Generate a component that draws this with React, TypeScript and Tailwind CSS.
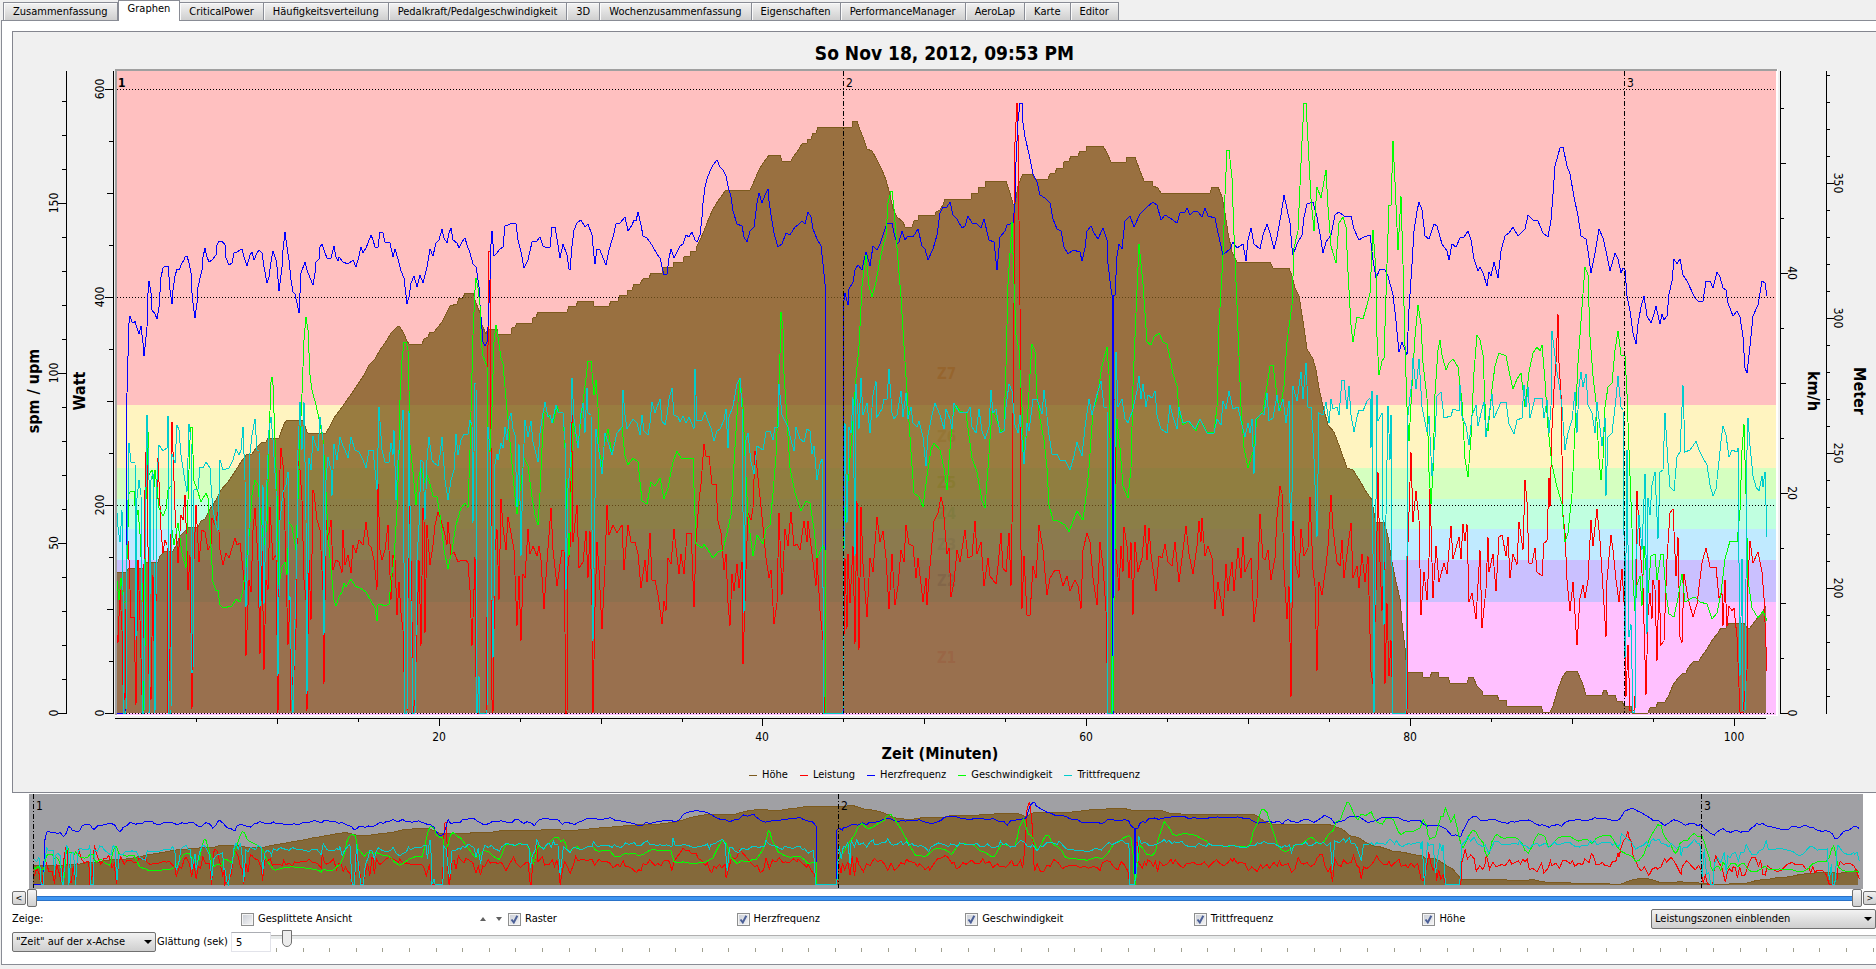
import { useState } from "react";

const TABS = [
    "Zusammenfassung",
    "Graphen",
    "CriticalPower",
    "Häufigkeitsverteilung",
    "Pedalkraft/Pedalgeschwindigkeit",
    "3D",
    "Wochenzusammenfassung",
    "Eigenschaften",
    "PerformanceManager",
    "AeroLap",
    "Karte",
    "Editor",
];

const SERIES = ["Raster", "Herzfrequenz", "Geschwindigkeit", "Trittfrequenz", "Höhe"];

const LEGEND = [
    { name: "Höhe", color: "bg-[#7c5a1e]" },
    { name: "Leistung", color: "bg-[#ff0000]" },
    { name: "Herzfrequenz", color: "bg-[#0000ff]" },
    { name: "Geschwindigkeit", color: "bg-[#00ff00]" },
    { name: "Trittfrequenz", color: "bg-[#00cdcd]" },
];

const ZONES = [
    { name: "Z7", top: 71, bottom: 405, fill: "#ffc0c0", text: "#f08c70", y: 379 },
    { name: "Z6", top: 405, bottom: 468, fill: "#fff4c0", text: "#ecdc90", y: 442 },
    { name: "Z5", top: 468, bottom: 499, fill: "#d5ffc0", text: "#b8f080", y: 488 },
    { name: "Z4", top: 499, bottom: 529, fill: "#c0ffe0", text: "#90f0c0", y: 519 },
    { name: "Z3", top: 529, bottom: 560, fill: "#c0eaff", text: "#a0d0f0", y: 550 },
    { name: "Z2", top: 560, bottom: 602, fill: "#cac0ff", text: "#9a90e8", y: 586 },
    { name: "Z1", top: 602, bottom: 715, fill: "#ffc0ff", text: "#ff90d8", y: 663 },
];

const HEART =
    "117,713 126,713 127,393 128,357 129,323 130,316 132,322 134,323 135,321 137,328 139,334 141,326 143,343 144,356 145,347 147,327 148,293 149,281 151,293 152,310 155,314 157,319 159,307 161,277 163,268 165,266 168,266 169,277 170,290 172,304 173,290 175,276 177,269 179,270 182,263 184,260 185,257 187,256 189,263 191,273 192,293 193,303 195,318 197,303 198,287 202,270 203,257 205,248 207,257 209,262 212,260 216,255 217,245 219,241 222,241 225,245 226,258 229,265 232,263 234,253 237,252 242,249 244,257 247,266 250,255 252,252 254,260 257,253 259,250 262,253 264,267 267,283 269,277 271,262 273,251 276,260 277,267 279,291 282,267 283,250 285,232 287,247 289,260 291,280 293,292 295,294 297,303 299,313 300,293 301,273 305,262 307,270 310,278 313,285 315,273 316,262 319,259 320,247 322,244 325,253 327,258 331,258 334,246 336,257 338,261 339,257 343,262 348,264 353,260 356,267 358,260 361,247 363,253 366,248 368,243 371,235 373,240 375,247 378,247 380,232 383,233 385,242 390,243 393,257 395,249 398,259 401,271 404,278 407,304 409,297 411,283 414,276 417,287 420,275 423,283 427,267 430,249 433,256 436,243 439,240 442,229 444,238 447,243 449,233 451,228 453,240 457,243 459,248 462,242 465,238 467,245 470,253 473,264 476,267 477,273 479,287 480,305 482,329 483,342 485,346 487,342 488,327 490,280 491,244 492,231 494,256 497,253 500,249 503,247 505,226 508,225 512,223 516,224 518,240 521,252 524,268 528,260 532,242 537,241 540,237 543,246 547,248 550,247 552,227 555,227 557,239 560,258 563,244 567,255 569,269 570,270 572,246 574,230 577,223 581,220 585,227 588,224 592,235 594,256 595,264 597,249 600,250 603,258 606,265 609,250 613,237 616,224 620,223 625,217 628,231 632,225 634,220 636,221 638,212 641,225 643,236 647,238 650,242 653,247 657,254 660,258 663,271 664,275 667,274 669,258 671,249 674,258 677,252 680,246 683,244 686,235 689,237 692,232 695,240 697,242 700,235 702,217 703,203 705,187 707,179 710,171 713,165 717,160 720,167 723,170 726,176 728,186 731,197 733,211 737,224 742,226 744,237 747,242 750,231 754,227 757,203 759,193 762,203 765,195 768,189 769,201 771,215 774,233 778,247 782,244 786,233 790,235 795,227 798,225 802,221 805,224 808,212 811,217 813,229 817,239 821,246 823,264 825,284 825,713 843,713 843,308 845,293 848,305 849,289 853,282 855,270 858,265 862,270 864,260 866,252 869,262 870,266 873,246 877,250 880,244 883,235 887,223 892,223 894,233 897,244 899,242 902,231 905,240 908,236 913,237 918,229 922,246 925,249 928,260 933,249 937,235 940,213 943,207 947,207 950,202 953,215 957,219 962,228 965,226 968,216 972,223 977,224 981,228 984,219 989,240 994,242 997,270 1000,237 1005,231 1007,225 1013,223 1015,203 1016,162 1018,121 1020,103 1022,103 1023,123 1025,137 1029,154 1033,174 1037,182 1040,195 1045,198 1050,203 1053,219 1057,229 1061,231 1064,247 1068,254 1073,250 1080,252 1082,261 1085,248 1087,231 1091,226 1094,233 1098,239 1103,228 1107,240 1108,264 1111,289 1112,295 1112,713 1113,713 1113,295 1115,295 1117,256 1119,244 1122,249 1125,221 1130,216 1134,227 1140,214 1147,207 1153,202 1157,205 1161,220 1165,215 1170,218 1177,223 1180,213 1185,212 1187,208 1190,215 1194,211 1198,212 1202,217 1205,208 1208,216 1215,218 1218,233 1221,246 1223,255 1230,249 1233,242 1237,248 1243,244 1246,261 1248,240 1251,228 1254,244 1260,249 1263,235 1267,224 1270,233 1274,249 1277,237 1281,215 1284,195 1287,209 1290,223 1292,248 1293,255 1297,244 1302,235 1304,217 1307,204 1313,202 1317,217 1321,240 1323,253 1326,242 1331,235 1335,215 1339,212 1344,216 1351,216 1354,229 1359,240 1364,237 1370,235 1373,260 1376,278 1380,269 1385,270 1388,276 1393,295 1396,321 1399,352 1402,342 1407,355 1409,309 1412,264 1414,231 1417,211 1419,202 1422,210 1425,236 1429,239 1434,224 1437,226 1442,244 1447,251 1449,260 1452,244 1456,247 1460,238 1464,237 1468,231 1471,240 1474,259 1478,271 1480,267 1483,273 1487,286 1489,272 1491,276 1494,262 1498,278 1501,251 1505,236 1509,233 1513,227 1518,236 1525,229 1528,215 1533,220 1538,221 1543,233 1548,237 1551,220 1553,194 1555,166 1560,148 1563,147 1567,166 1570,174 1574,197 1578,216 1581,236 1586,239 1588,251 1591,273 1595,253 1599,229 1603,238 1606,251 1610,271 1615,253 1618,259 1621,273 1623,268 1625,270 1627,296 1630,311 1633,333 1636,344 1638,324 1641,307 1644,296 1647,316 1651,323 1654,314 1656,306 1660,324 1662,314 1664,320 1667,316 1669,294 1672,281 1674,259 1677,264 1680,259 1683,275 1687,281 1695,298 1699,302 1703,301 1706,281 1710,281 1713,288 1717,272 1720,277 1723,288 1726,290 1728,303 1733,316 1737,311 1740,317 1743,337 1745,368 1747,373 1750,346 1753,316 1758,305 1762,281 1765,283 1767,296";

const ALTITUDE =
    "117,572 126,572 129,568 144,568 145,562 158,562 160,556 165,551 173,551 176,546 180,536 186,530 188,527 198,527 201,521 205,519 210,509 216,500 221,490 228,482 234,473 241,462 246,455 252,454 256,448 261,443 266,442 268,438 279,438 284,424 287,420 303,420 307,432 308,433 326,433 330,426 334,418 340,410 347,400 352,393 358,384 364,375 369,365 375,359 380,350 387,340 391,333 396,328 398,326 400,327 404,334 407,341 409,344 422,344 424,339 428,337 430,332 434,332 438,327 442,322 446,314 450,306 457,304 459,298 463,298 465,293 473,293 476,303 480,313 482,325 486,334 488,329 497,329 498,334 511,334 512,328 515,327 517,323 532,323 533,318 536,317 538,312 567,312 569,306 576,306 578,301 593,301 594,306 609,306 611,301 618,301 620,295 627,295 628,290 632,290 634,284 640,284 643,279 649,278 651,273 662,273 663,267 673,267 674,262 683,262 684,257 690,256 691,251 696,251 697,246 700,240 704,231 709,218 713,209 718,201 723,194 726,190 750,190 753,184 758,172 763,163 767,158 769,155 780,155 782,161 791,161 793,157 797,152 802,144 807,143 808,139 811,139 813,133 816,133 818,127 852,127 853,121 857,121 860,130 863,137 867,149 872,151 877,160 882,170 886,180 890,195 893,209 897,217 903,222 905,227 912,227 914,221 918,220 919,215 935,215 936,212 940,210 943,205 945,199 971,199 972,193 978,193 979,187 985,187 986,181 1006,181 1010,193 1013,204 1015,204 1018,186 1021,178 1023,174 1032,174 1035,179 1048,179 1050,174 1055,173 1057,168 1063,168 1064,162 1069,161 1071,156 1078,156 1080,151 1086,151 1087,146 1103,146 1107,153 1111,162 1126,162 1127,157 1135,157 1140,171 1144,181 1152,181 1153,186 1158,188 1161,193 1210,193 1212,187 1218,187 1222,197 1225,213 1228,233 1232,252 1237,262 1270,262 1273,268 1289,268 1292,276 1295,288 1299,296 1303,321 1307,349 1313,359 1316,370 1319,388 1323,406 1328,425 1334,432 1340,448 1347,468 1353,470 1360,481 1365,490 1372,500 1374,513 1376,522 1384,522 1388,537 1392,562 1396,582 1400,599 1402,623 1405,648 1407,672 1422,672 1423,677 1430,677 1432,672 1438,672 1439,677 1448,677 1450,683 1467,683 1469,677 1473,677 1477,686 1482,691 1483,695 1497,695 1499,700 1506,700 1507,706 1541,706 1543,712 1550,712 1553,706 1558,689 1563,676 1567,671 1577,671 1582,682 1586,695 1602,695 1604,690 1606,690 1608,695 1615,695 1617,701 1622,701 1624,706 1631,706 1632,713 1648,713 1650,708 1656,707 1658,702 1665,702 1669,695 1673,685 1678,678 1682,674 1686,673 1688,668 1693,662 1699,661 1702,656 1707,649 1713,639 1718,633 1721,628 1726,628 1729,623 1744,623 1747,628 1750,628 1753,624 1758,617 1762,613 1765,608 1766,606";

const SPEED =
    "117,581 119,600 121,578 124,603 126,601 127,560 129,494 130,492 134,491 136,520 138,510 140,534 142,580 143,713 145,650 146,500 148,431 149,475 152,470 154,487 155,470 157,487 159,508 163,516 166,509 168,490 171,486 172,530 174,545 178,523 182,553 186,568 188,500 190,440 191,427 192,427 194,481 197,489 201,502 206,493 208,498 210,530 213,582 216,591 218,590 220,605 223,608 232,606 236,599 240,602 243,590 245,575 248,550 252,495 255,480 258,485 261,520 264,545 267,525 269,440 271,382 272,377 273,385 275,440 277,495 279,585 282,567 285,562 287,575 289,522 292,527 296,550 298,500 300,440 302,394 304,340 306,317 308,330 310,375 312,390 316,405 320,423 323,440 325,470 328,535 331,570 334,600 336,606 339,597 342,592 344,583 346,587 351,579 355,586 360,588 366,592 371,601 375,608 377,621 378,605 380,604 385,606 389,604 391,580 394,560 397,510 399,455 400,400 402,360 404,342 406,342 408,350 409,390 410,445 413,472 416,505 418,480 421,468 424,483 427,475 430,484 433,496 437,497 440,515 444,550 448,569 452,550 456,525 461,508 465,503 468,508 470,450 473,335 475,290 476,278 478,288 480,305 481,340 483,356 487,366 488,427 490,452 492,407 494,342 496,325 498,337 501,358 503,364 506,399 509,431 512,464 515,497 517,514 521,484 524,458 528,466 532,497 535,515 538,525 540,493 542,448 544,411 548,415 553,423 557,406 559,412 563,413 565,448 567,509 569,556 570,533 572,452 573,423 576,437 578,448 581,419 585,386 588,361 591,361 594,395 596,380 598,407 599,448 602,468 604,446 608,429 612,454 617,433 622,427 625,456 628,465 633,458 638,462 642,501 647,504 651,482 655,486 660,478 664,499 668,488 671,472 673,462 677,451 681,458 687,459 693,458 694,488 696,544 702,548 704,544 708,550 713,558 718,552 723,550 727,533 731,515 733,480 737,415 740,378 743,407 745,456 748,517 753,556 757,535 763,544 766,529 770,525 773,493 776,456 778,407 780,354 781,312 783,329 784,374 787,419 790,468 795,493 801,511 806,501 810,503 814,529 817,558 823,545 825,550 825,713 843,713 844,537 847,493 852,435 856,378 859,346 862,286 866,255 869,286 872,297 876,282 880,260 883,246 886,235 888,203 891,191 892,191 894,209 897,248 901,297 904,346 908,407 911,452 914,493 919,497 923,507 927,476 931,450 934,443 940,450 944,468 947,490 949,460 953,415 956,405 960,411 966,413 972,458 977,472 982,501 985,508 988,468 992,411 995,415 1001,432 1004,429 1006,366 1008,284 1012,222 1014,284 1016,335 1019,350 1022,407 1024,462 1027,427 1030,374 1032,344 1035,352 1037,395 1040,419 1044,440 1047,468 1049,505 1053,520 1058,521 1065,525 1069,532 1073,521 1077,511 1083,520 1087,488 1089,468 1093,411 1097,399 1102,366 1107,347 1109,374 1111,500 1112,713 1113,713 1114,600 1115,550 1117,419 1120,448 1123,486 1128,498 1131,468 1133,386 1136,313 1139,244 1143,284 1147,342 1151,345 1154,337 1159,333 1163,342 1167,344 1170,358 1173,374 1177,386 1179,411 1183,425 1188,421 1196,431 1200,419 1207,432 1214,433 1217,407 1219,325 1223,256 1225,195 1227,150 1229,150 1232,178 1234,235 1237,305 1241,407 1244,448 1248,468 1253,452 1257,419 1263,411 1267,386 1270,366 1273,365 1277,395 1280,411 1284,386 1287,342 1292,305 1294,248 1298,231 1302,141 1304,103 1306,103 1308,141 1311,199 1314,231 1317,187 1321,198 1326,170 1328,207 1331,246 1336,263 1339,223 1343,217 1346,227 1348,272 1351,325 1353,342 1357,317 1363,319 1367,305 1370,293 1373,230 1376,272 1377,337 1379,375 1382,361 1384,358 1387,264 1389,205 1391,205 1393,141 1395,182 1398,250 1401,196 1403,264 1405,346 1407,407 1409,441 1412,386 1415,337 1418,305 1421,324 1423,363 1427,398 1429,472 1431,504 1433,472 1435,394 1438,350 1440,340 1442,355 1446,370 1449,363 1453,359 1458,367 1462,402 1465,459 1468,477 1471,437 1474,372 1477,335 1480,340 1483,355 1486,428 1488,431 1492,389 1495,366 1499,353 1506,356 1510,376 1513,389 1517,379 1521,373 1525,407 1529,372 1533,353 1537,347 1540,351 1542,345 1545,381 1548,428 1552,465 1557,487 1562,504 1565,542 1568,533 1572,494 1575,428 1578,363 1582,307 1585,267 1588,275 1590,337 1593,376 1596,402 1599,459 1601,480 1603,459 1605,407 1608,387 1612,383 1615,350 1618,331 1621,355 1625,356 1627,394 1629,450 1632,528 1633,580 1635,611 1637,585 1640,576 1642,606 1644,546 1648,593 1651,556 1655,554 1657,580 1661,554 1663,554 1666,593 1669,614 1674,617 1678,598 1682,574 1685,602 1692,598 1695,597 1700,602 1707,604 1712,619 1717,613 1721,593 1725,559 1730,541 1737,542 1740,511 1742,450 1744,424 1746,494 1748,580 1752,608 1758,618 1763,611 1767,621";

const CADENCE =
    "117,513 118,527 120,542 122,510 123,590 124,713 126,713 127,545 128,500 129,443 131,462 135,462 136,640 137,498 139,480 141,495 142,600 143,713 144,713 145,560 147,415 149,480 149,713 151,480 153,472 154,560 155,713 157,480 159,445 163,451 167,448 168,416 169,713 171,713 172,454 175,463 177,425 179,430 181,455 184,475 187,492 189,424 191,440 192,672 193,672 194,490 198,489 200,467 203,468 206,462 210,468 211,485 213,510 216,525 218,531 220,460 223,470 229,468 233,460 236,449 239,455 241,450 243,427 245,480 246,607 249,530 250,453 252,435 255,419 257,450 259,450 260,607 263,485 264,604 267,480 269,430 271,417 273,440 276,489 277,560 278,676 280,520 283,492 286,485 288,472 289,600 290,596 292,700 293,713 295,620 297,540 298,450 300,402 302,450 304,402 306,520 307,694 309,458 311,470 313,436 315,443 318,451 320,417 323,440 324,635 326,480 328,457 331,470 332,496 334,444 337,460 340,437 343,446 345,450 348,458 351,437 355,450 359,452 363,460 366,468 369,450 373,450 375,470 377,490 379,407 382,450 385,462 389,462 391,443 393,455 394,430 396,500 398,460 401,430 403,410 405,713 407,713 408,560 409,411 411,600 413,713 415,713 417,560 419,525 421,460 423,462 425,520 427,460 429,437 432,460 434,463 438,466 440,455 442,437 445,480 448,500 451,480 454,470 456,434 458,455 461,440 464,434 468,434 470,420 472,425 473,523 475,383 476,384 477,713 479,676 480,713 487,713 488,427 490,450 492,600 493,658 494,600 495,464 497,454 498,460 501,443 503,448 505,427 507,440 509,419 511,413 513,429 515,435 517,507 519,444 521,556 523,468 525,420 528,437 531,421 533,442 538,462 540,433 542,419 545,402 548,417 550,415 552,423 556,405 558,412 563,413 565,440 566,590 568,488 570,468 572,378 574,419 578,448 581,413 583,403 585,433 587,388 588,413 591,415 593,641 594,570 596,429 598,444 602,474 605,433 608,442 612,455 617,433 622,427 623,390 625,415 627,429 633,419 637,423 640,435 642,415 644,431 648,435 650,423 652,402 655,413 660,399 662,421 665,425 667,415 669,399 672,388 674,415 678,417 680,422 683,416 686,423 689,417 694,429 695,369 697,421 702,420 705,412 708,421 711,428 714,441 717,431 720,429 724,420 726,409 728,448 729,417 733,406 737,384 740,378 742,407 744,613 746,440 748,433 751,462 754,474 757,446 763,450 766,432 770,431 773,440 775,427 778,427 779,384 782,415 785,421 788,427 791,440 794,451 796,427 800,439 804,442 807,429 810,431 812,454 814,446 817,480 820,464 822,459 824,713 843,713 844,550 845,423 847,523 849,427 851,433 853,397 855,556 856,384 859,429 861,378 863,415 867,403 870,433 873,395 876,381 877,417 882,409 884,399 887,399 889,369 892,413 894,419 897,415 901,391 903,417 906,393 908,419 911,407 913,423 917,427 919,421 923,437 926,466 928,435 932,415 935,403 940,415 944,429 946,409 950,419 952,429 954,403 959,412 967,413 970,407 972,427 976,433 979,409 982,431 985,439 989,427 991,390 993,413 996,409 1000,433 1004,431 1006,407 1009,384 1012,391 1015,425 1018,433 1020,415 1024,464 1027,423 1029,431 1033,399 1037,399 1042,414 1044,390 1046,407 1049,435 1052,454 1057,454 1060,460 1065,460 1070,470 1074,456 1077,442 1082,456 1085,427 1089,399 1092,415 1096,398 1101,381 1104,407 1107,407 1108,713 1112,713 1114,600 1115,448 1116,352 1118,407 1122,399 1125,419 1128,423 1133,409 1137,391 1139,376 1141,399 1143,384 1146,407 1148,395 1152,398 1155,391 1157,415 1161,429 1167,433 1170,405 1173,417 1177,429 1179,407 1183,423 1189,421 1195,429 1200,419 1207,433 1214,433 1217,419 1221,425 1223,401 1226,409 1229,391 1233,409 1238,407 1241,421 1245,437 1248,423 1250,433 1252,419 1254,474 1256,419 1262,413 1264,415 1267,393 1269,421 1273,418 1277,395 1279,411 1283,399 1286,423 1289,401 1291,603 1293,386 1297,401 1301,372 1303,399 1306,363 1308,407 1311,407 1313,433 1317,537 1319,413 1323,415 1326,402 1329,423 1331,399 1333,409 1337,407 1339,415 1342,380 1344,380 1347,409 1349,386 1351,415 1354,432 1357,417 1359,410 1363,411 1367,401 1370,398 1371,448 1372,391 1374,713 1377,395 1378,421 1382,413 1384,625 1388,406 1390,460 1391,415 1393,713 1406,713 1407,558 1408,415 1412,380 1413,358 1416,389 1419,359 1422,407 1427,432 1429,416 1432,476 1435,437 1437,396 1441,392 1444,418 1451,416 1453,409 1459,411 1460,385 1462,416 1466,426 1469,445 1472,416 1476,405 1478,426 1482,409 1484,402 1486,437 1489,416 1492,394 1494,418 1498,409 1501,402 1506,402 1509,424 1514,434 1517,420 1522,418 1524,385 1526,407 1528,387 1530,418 1535,398 1542,398 1544,418 1547,400 1549,433 1551,407 1552,331 1554,348 1557,372 1560,390 1562,407 1565,450 1568,433 1572,420 1575,392 1577,433 1579,387 1581,372 1583,387 1586,374 1588,405 1592,413 1595,433 1597,402 1600,428 1602,446 1605,418 1606,496 1608,437 1612,433 1614,416 1616,398 1618,376 1621,407 1623,410 1625,658 1627,450 1629,637 1631,624 1633,712 1635,712 1636,559 1639,515 1642,550 1645,474 1647,634 1648,498 1650,515 1652,485 1655,472 1658,539 1660,472 1663,470 1665,413 1668,463 1670,487 1674,491 1677,457 1680,452 1683,385 1685,452 1690,450 1693,446 1696,441 1699,450 1703,458 1707,465 1710,485 1713,496 1716,489 1719,461 1721,441 1723,426 1726,435 1729,457 1732,450 1737,452 1738,448 1740,676 1742,559 1743,710 1745,712 1747,450 1748,418 1750,446 1753,476 1756,487 1759,491 1762,476 1763,487 1765,472 1767,537";

const POWER =
    "117,635 118,643 120,590 122,630 123,685 125,700 127,520 129,560 131,618 134,617 136,705 138,560 140,620 142,695 143,640 145,490 147,415 149,674 151,700 153,575 155,705 157,500 158,458 161,530 163,553 165,540 167,545 168,713 170,650 172,422 175,510 178,563 181,515 183,520 185,495 187,550 188,590 190,555 192,709 194,560 196,505 199,562 202,530 205,532 208,550 211,545 212,518 215,525 218,512 220,550 223,565 226,553 229,558 232,548 235,538 237,545 240,543 243,570 245,590 246,656 249,580 251,592 253,530 255,508 258,560 260,654 262,550 264,670 266,580 268,590 270,507 273,560 276,555 278,713 280,470 281,448 283,465 285,530 288,645 290,600 290,711 292,685 294,670 296,630 298,461 300,470 302,500 304,580 306,600 307,711 309,560 311,620 313,490 314,493 317,520 320,530 323,590 324,684 326,520 328,540 331,520 333,570 336,560 339,562 342,573 343,530 345,565 348,555 351,573 353,545 356,553 359,540 363,545 366,522 369,545 371,547 374,560 377,590 378,483 380,550 382,560 385,550 388,525 391,600 393,555 395,560 397,615 399,582 401,613 403,630 405,713 407,713 409,487 411,560 412,620 413,713 415,700 417,625 419,560 421,646 423,508 424,520 425,633 427,525 430,565 433,545 435,525 438,512 441,520 445,535 447,545 448,522 451,555 454,552 458,562 462,560 466,560 468,563 470,590 472,646 474,590 475,557 476,677 478,713 486,713 487,620 488,346 489,251 490,251 491,448 492,700 493,713 495,550 497,529 499,600 501,499 503,527 506,550 508,517 511,533 514,550 517,626 519,576 521,641 523,574 525,578 528,529 530,554 533,546 537,556 539,546 541,560 544,609 547,562 551,508 553,550 557,586 562,550 564,550 566,713 567,713 568,566 570,548 572,415 573,542 577,505 579,568 583,562 586,531 588,578 590,531 592,605 593,713 595,607 597,542 599,570 602,629 605,566 607,505 609,535 613,525 617,533 622,525 624,570 628,525 631,542 635,542 638,554 641,588 645,560 647,582 650,533 652,580 655,580 658,595 662,624 664,601 666,611 668,558 671,564 674,529 676,548 679,574 681,554 684,574 687,533 691,533 692,554 694,607 696,542 699,501 701,484 704,444 706,456 709,456 712,484 716,484 718,521 721,533 724,570 726,554 728,603 730,626 732,574 734,591 737,564 739,588 742,562 743,664 746,570 748,513 751,520 753,508 755,451 757,468 760,497 763,527 766,558 769,578 771,570 774,624 777,603 779,513 782,595 785,529 788,546 791,512 794,546 797,544 800,550 804,521 807,542 808,521 812,554 816,586 817,556 820,611 823,640 824,697 825,713 843,713 845,558 847,629 848,554 850,603 853,546 855,644 857,501 859,650 861,507 863,564 867,617 870,558 873,572 877,517 880,542 883,531 886,558 889,609 892,554 895,605 898,586 901,550 904,562 906,525 909,544 913,546 916,578 918,558 923,602 926,578 927,605 930,566 934,521 938,513 941,497 943,505 947,554 949,548 951,597 954,582 957,550 960,562 965,530 968,558 972,556 975,521 977,554 981,542 984,586 988,558 990,576 996,584 998,566 1001,533 1003,568 1006,572 1009,533 1011,586 1012,525 1014,305 1015,142 1017,103 1018,133 1020,305 1021,550 1022,609 1024,556 1027,615 1030,615 1033,566 1036,578 1039,525 1043,550 1047,595 1050,578 1055,570 1059,570 1063,586 1067,576 1070,591 1075,580 1078,586 1081,609 1083,550 1087,533 1090,542 1093,578 1097,605 1100,542 1103,566 1106,611 1108,713 1112,713 1113,399 1115,399 1116,550 1119,591 1121,546 1123,572 1124,527 1127,546 1129,578 1131,542 1133,615 1135,542 1138,572 1142,558 1145,525 1147,560 1149,528 1151,554 1156,591 1159,556 1162,558 1165,544 1168,562 1172,566 1175,542 1179,582 1183,550 1186,526 1189,554 1193,574 1197,546 1199,521 1201,542 1202,518 1205,556 1208,546 1212,558 1215,609 1218,582 1223,616 1226,564 1228,591 1232,562 1234,591 1238,548 1241,578 1243,537 1245,572 1248,564 1251,558 1254,622 1257,599 1260,514 1263,558 1265,560 1268,550 1271,580 1275,558 1277,517 1280,486 1282,493 1284,570 1287,619 1289,586 1291,697 1293,521 1296,566 1299,578 1301,529 1304,556 1308,548 1310,497 1313,570 1315,586 1317,671 1319,582 1322,595 1326,566 1328,546 1331,495 1333,529 1337,562 1340,566 1342,540 1344,578 1347,554 1351,523 1353,578 1357,566 1359,588 1362,554 1365,582 1368,556 1371,672 1373,684 1376,591 1378,472 1380,562 1382,611 1384,562 1385,684 1387,603 1389,676 1391,640 1393,713 1407,713 1408,543 1411,452 1413,522 1416,491 1419,520 1421,615 1424,572 1427,600 1429,559 1430,489 1433,598 1436,546 1439,582 1444,563 1447,574 1451,526 1453,559 1459,537 1461,559 1463,524 1465,541 1467,524 1469,602 1472,593 1476,619 1480,550 1482,628 1486,589 1488,537 1489,572 1493,554 1496,591 1499,537 1502,535 1506,556 1508,537 1510,578 1513,554 1517,565 1519,522 1523,550 1525,480 1527,502 1529,563 1532,563 1535,548 1537,572 1542,576 1544,543 1547,541 1549,478 1550,507 1552,428 1554,389 1556,363 1558,314 1559,363 1561,394 1563,515 1565,533 1567,580 1570,611 1573,582 1577,645 1580,598 1583,585 1585,598 1588,580 1591,520 1593,546 1597,509 1600,541 1603,589 1606,637 1607,580 1611,535 1613,550 1616,580 1619,602 1622,569 1624,602 1626,697 1628,645 1630,710 1634,710 1635,697 1637,491 1640,546 1643,587 1646,695 1648,615 1650,593 1652,619 1653,580 1655,589 1657,661 1659,580 1661,645 1664,641 1667,559 1670,513 1673,509 1676,576 1678,537 1680,637 1682,643 1684,574 1688,598 1693,617 1697,604 1702,563 1706,548 1710,567 1716,567 1719,598 1722,593 1723,626 1725,580 1727,626 1729,606 1732,611 1734,608 1737,637 1740,712 1743,712 1747,671 1748,580 1750,541 1753,563 1758,552 1762,572 1764,598 1767,671";

const LAPS = [
    { label: "2", x: 843 },
    { label: "3", x: 1624 },
];

const steps = (from: number, count: number, size: number) =>
    Array.from({ length: count }, (_, i) => ({ i, pos: Math.round(from + i * size) }));

const Curves = () => (
    <g fill="none" strokeWidth="1" shapeRendering="crispEdges">
        <polygon points={`117,713 ${ALTITUDE} 1766,713`} fill="#7c5a1c" fillOpacity="0.78" />
        <polyline points={ALTITUDE} stroke="#7c5a1e" vectorEffect="non-scaling-stroke" />
        <polyline points={POWER} stroke="#ff0000" vectorEffect="non-scaling-stroke" />
        <polyline points={HEART} stroke="#0000ff" vectorEffect="non-scaling-stroke" />
        <polyline points={SPEED} stroke="#00ff00" vectorEffect="non-scaling-stroke" />
        <polyline points={CADENCE} stroke="#00cdcd" vectorEffect="non-scaling-stroke" />
    </g>
);

type AxisProps = {
    x: number;
    side: 1 | -1;
    ticks: { pos: number; size: number; label?: string }[];
    labelX: number;
    title: string;
    titleX: number;
};

const VerticalAxis = ({ x, side, ticks, labelX, title, titleX }: AxisProps) => {
    const angle = side * 90;
    return (
        <g>
            <g stroke="#000" shapeRendering="crispEdges">
                <line x1={x} y1="71" x2={x} y2="714" />
                {ticks.map((t) => (
                    <line key={t.pos} x1={x} y1={t.pos} x2={x + side * t.size} y2={t.pos} />
                ))}
            </g>
            {ticks.filter((t) => t.label).map((t) => (
                <text key={t.pos} transform={`translate(${labelX} ${t.pos}) rotate(${angle})`} textAnchor="middle" className="text-[12px]">
                    {t.label}
                </text>
            ))}
            <text transform={`translate(${titleX} 391) rotate(${angle})`} textAnchor="middle" className="text-[16px] font-bold">
                {title}
            </text>
        </g>
    );
};

const RideChart = () => {
    const bpm = steps(713, 19, -34).map(({ i, pos }) => ({
        pos,
        size: i % 5 === 0 ? 8 : 4,
        label: i % 5 === 0 ? String(i * 10) : undefined,
    }));
    const watts = steps(713, 13, -52).map(({ i, pos }) => ({
        pos,
        size: i % 4 === 0 ? 8 : i % 2 === 0 ? 6 : 4,
        label: i % 4 === 0 ? String(i * 50) : undefined,
    }));
    const kmh = steps(713, 12, -55).map(({ i, pos }) => ({
        pos,
        size: i % 4 === 0 ? 8 : i % 2 === 0 ? 6 : 4,
        label: i % 4 === 0 ? String(i * 5) : undefined,
    }));
    const meters = steps(696, 24, -27).map(({ i, pos }) => ({
        pos,
        size: i % 5 === 4 ? 8 : 4,
        label: i % 5 === 4 ? String(160 + i * 10) : undefined,
    }));
    const minutes = steps(196, 20, 81).map(({ i, pos }) => ({
        pos: pos - Math.round(i / 14),
        size: i % 4 === 3 ? 8 : i % 2 === 1 ? 6 : 4,
        label: i % 4 === 3 ? String((i + 1) * 5) : undefined,
    }));

    return (
        <svg viewBox="13 69 1863 695" className="block w-full" role="img" aria-label="Verlauf der Fahrt">
            <rect x="115" y="69" width="1663" height="647" fill="#fff" />
            <rect x="115" y="69" width="1662" height="2" fill="#a0a0a0" />
            <rect x="115" y="69" width="2" height="646" fill="#a0a0a0" />
            {ZONES.map((z) => (
                <g key={z.name}>
                    <rect x="117" y={z.top} width="1659" height={z.bottom - z.top} fill={z.fill} shapeRendering="crispEdges" />
                    <text x="937" y={z.y} fill={z.text} className="text-[15px] font-bold">{z.name}</text>
                </g>
            ))}
            <g stroke="#000" strokeDasharray="1 2" shapeRendering="crispEdges">
                {[89, 297, 505, 713].map((y) => (
                    <line key={y} x1="117" x2="1776" y1={y} y2={y} />
                ))}
            </g>
            <Curves />
            <text x="118" y="87" className="text-[12px] font-bold">1</text>
            {LAPS.map((lap) => (
                <g key={lap.label}>
                    <line x1={lap.x} x2={lap.x} y1="71" y2="713" stroke="#000" strokeDasharray="5 2 1 2" shapeRendering="crispEdges" />
                    <text x={lap.x + 3} y="87" className="text-[12px]">{lap.label}</text>
                </g>
            ))}
            <VerticalAxis x={66} side={-1} ticks={bpm} labelX={58} title="spm / upm" titleX={39} />
            <VerticalAxis x={113} side={-1} ticks={watts} labelX={104} title="Watt" titleX={85} />
            <VerticalAxis x={1780} side={1} ticks={kmh} labelX={1788} title="km/h" titleX={1808} />
            <VerticalAxis x={1826} side={1} ticks={meters} labelX={1834} title="Meter" titleX={1854} />
            <g stroke="#000" shapeRendering="crispEdges">
                <line x1="115" x2="1766" y1="718" y2="718" />
                {minutes.map((t) => (
                    <line key={t.pos} x1={t.pos} x2={t.pos} y1="718" y2={718 + t.size} />
                ))}
            </g>
            {minutes.filter((t) => t.label).map((t) => (
                <text key={t.pos} x={t.pos} y="741" textAnchor="middle" className="text-[12px]">{t.label}</text>
            ))}
            <text x="940" y="759" textAnchor="middle" className="text-[16px] font-bold">Zeit (Minuten)</text>
        </svg>
    );
};

const Overview = () => (
    <svg viewBox="29 794 1834 95" className="block w-full bg-[#a0a0a4]" role="img" aria-label="Übersicht">
        <g transform="translate(-96 789) scale(1.1065 0.134)">
            <Curves />
        </g>
        {[{ label: "1", x: 33 }, { label: "2", x: 838 }, { label: "3", x: 1701 }].map((lap) => (
            <g key={lap.label}>
                <line x1={lap.x} x2={lap.x} y1="794" y2="888" stroke="#000" strokeDasharray="5 2 1 2" shapeRendering="crispEdges" />
                <text x={lap.x + 3} y="810" className="text-[12px]">{lap.label}</text>
            </g>
        ))}
    </svg>
);

const rangeThumb =
    "absolute inset-0 h-full w-full appearance-none bg-transparent pointer-events-none [&::-webkit-slider-thumb]:pointer-events-auto [&::-webkit-slider-thumb]:appearance-none [&::-webkit-slider-thumb]:w-2.5 [&::-webkit-slider-thumb]:h-[18px] [&::-webkit-slider-thumb]:rounded-xs [&::-webkit-slider-thumb]:border [&::-webkit-slider-thumb]:border-solid [&::-webkit-slider-thumb]:border-[#707070] [&::-webkit-slider-thumb]:bg-linear-to-b [&::-webkit-slider-thumb]:from-[#f4f4f4] [&::-webkit-slider-thumb]:to-[#d0d0d0]";

const stepButton =
    "h-3.5 w-3.5 shrink-0 rounded-xs border border-[#707070] bg-linear-to-b from-[#f2f2f2] to-[#d0d0d0] text-[9px] leading-[11px]";

const Select = ({ label, value }: { label: string; value: string }) => (
    <div className="relative">
        <select
            aria-label={label}
            className="block h-5 w-full appearance-none rounded-xs border border-[#707070] bg-linear-to-b from-[#f2f2f2] to-[#cfcfcf] pl-[3px] pr-4"
        >
            <option>{value}</option>
        </select>
        <svg viewBox="0 0 8 4" className="pointer-events-none absolute right-1 top-2 h-1 w-2">
            <path d="M0 0h8L4 4z" />
        </svg>
    </div>
);

const Check = ({ label, defaultChecked }: { label: string; defaultChecked?: boolean }) => (
    <label className="flex items-center gap-1">
        <span className="relative block h-[13px] w-[13px]">
            <input
                type="checkbox"
                defaultChecked={defaultChecked}
                className="peer block h-[13px] w-[13px] appearance-none border border-[#8e8f8f] bg-linear-to-br from-[#c8ccd4] to-[#f6f6f6] shadow-[inset_0_0_0_1px_#f4f4f4]"
            />
            <svg viewBox="0 0 13 13" className="pointer-events-none absolute inset-0 hidden h-full w-full peer-checked:block">
                <path d="M3.5 6.5 5.8 9.5 9.3 2.8" fill="none" stroke="#4b5f97" strokeWidth="2" />
            </svg>
        </span>
        {label}
    </label>
);

const App = () => {
    const [activeTab, setActiveTab] = useState("Graphen");
    const [smoothing, setSmoothing] = useState("5");

    return (
        <div className="min-h-screen overflow-x-hidden bg-[#f0f0f0] font-['DejaVu_Sans_Condensed','DejaVu_Sans',sans-serif] text-[11px] leading-4 text-black">
            <nav className="flex h-5 items-end pl-[3px]">
                {TABS.map((tab) => (
                    <button
                        key={tab}
                        onClick={() => setActiveTab(tab)}
                        className={
                            tab === activeTab
                                ? "relative z-10 -mb-px h-[21px] whitespace-nowrap border-x border-t border-[#898c95] bg-white px-[9px] pb-1"
                                : "h-[18px] whitespace-nowrap border-r border-t border-[#898c95] bg-linear-to-b from-[#f3f3f3] to-[#cfcfcf] px-[9px] shadow-[inset_1px_1px_0_#fafafa] first:border-l"
                        }
                    >
                        {tab}
                    </button>
                ))}
            </nav>

            <main className="ml-px border-b border-l border-t border-[#898c95] bg-white pb-3 pl-2.5 pt-2.5">
                <section className="border-b border-l border-t border-[#84868f] bg-[#f0f0f0]">
                    <h1 className="pb-[9px] pt-3.5 text-center text-[19px] font-bold leading-[14px]">
                        So Nov 18, 2012, 09:53 PM
                    </h1>
                    <RideChart />
                    <ul className="flex justify-center gap-3 pb-[9px] pt-[3px]">
                        {LEGEND.map((item) => (
                            <li key={item.name} className="flex items-center gap-[5px]">
                                <span className={`h-px w-2 ${item.color}`} />
                                {item.name}
                            </li>
                        ))}
                    </ul>
                </section>

                <div className="ml-[17px] mr-[13px] mt-px">
                    <Overview />
                </div>

                <div className="flex h-[18px] items-center gap-px">
                    <button className={stepButton} aria-label="Zurück">&lt;</button>
                    <div className="relative h-full flex-1">
                        <div className="absolute inset-x-2 top-[7px] h-[5px] border-y border-[#2a72c8] bg-[#3c94f0]" />
                        <input type="range" aria-label="Bereichsanfang" defaultValue={0} className={rangeThumb} />
                        <input type="range" aria-label="Bereichsende" defaultValue={100} className={rangeThumb} />
                    </div>
                    <button className={`${stepButton} -mr-px`} aria-label="Weiter">&gt;</button>
                </div>

                <div className="mt-0.5 grid grid-cols-[229px_242px_25px_repeat(5,minmax(0,1fr))_225px] items-center">
                    <span>Zeige:</span>
                    <Check label="Gesplittete Ansicht" />
                    <svg viewBox="0 0 25 6" className="h-1.5 w-[25px] overflow-visible" fill="#606060">
                        <path d="M-3 5h6L0 1z" />
                        <path d="M13 1h6l-3 4z" />
                    </svg>
                    {SERIES.map((name) => (
                        <Check key={name} label={name} defaultChecked />
                    ))}
                    <Select label="Zonen" value="Leistungszonen einblenden" />
                </div>

                <div className="mt-[3px] flex h-5 items-center">
                    <div className="w-36">
                        <Select label="x-Achse" value={'"Zeit" auf der x-Achse'} />
                    </div>
                    <label htmlFor="smoothing" className="w-[75px] whitespace-nowrap pl-px">Glättung (sek)</label>
                    <input
                        id="smoothing"
                        value={smoothing}
                        onChange={(e) => setSmoothing(e.target.value)}
                        className="h-5 w-10 border border-[#e2e3ea] border-t-[#abadb3] bg-white px-1"
                    />
                    <div className="relative h-5 flex-1">
                        <div className="absolute inset-x-0 top-[3px] h-1 border-t border-[#b0b0b0] bg-[#e7eaea]" />
                        <div className="absolute inset-x-0 bottom-0 flex justify-between pl-[5px] pr-0.5">
                            {Array.from({ length: 61 }, (_, i) => (
                                <span key={i} className="h-1 w-px bg-[#a0a090]" />
                            ))}
                        </div>
                        <input
                            type="range"
                            aria-label="Glättung"
                            min={1}
                            max={600}
                            value={smoothing}
                            onChange={(e) => setSmoothing(e.target.value)}
                            className="absolute inset-x-0 -top-0.5 h-[17px] w-full appearance-none bg-transparent [&::-webkit-slider-thumb]:h-[17px] [&::-webkit-slider-thumb]:w-2.5 [&::-webkit-slider-thumb]:appearance-none [&::-webkit-slider-thumb]:rounded-t-xs [&::-webkit-slider-thumb]:rounded-b-full [&::-webkit-slider-thumb]:border [&::-webkit-slider-thumb]:border-solid [&::-webkit-slider-thumb]:border-[#707070] [&::-webkit-slider-thumb]:bg-[#ececec]"
                        />
                    </div>
                </div>
            </main>
        </div>
    );
};

export default App;
